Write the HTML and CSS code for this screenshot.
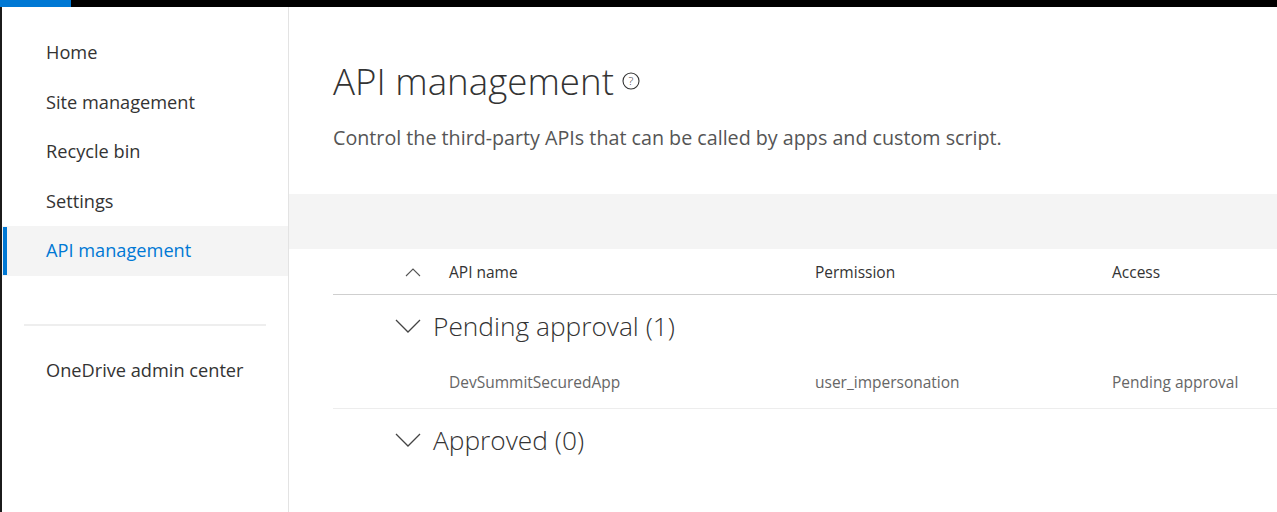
FILE: index.html
```html
<!DOCTYPE html>
<html>
<head>
<meta charset="utf-8">
<link rel="stylesheet" href="styles.css">
</head>
<body>
<div class="topbar"><div class="topbar-accent"></div></div>
<div class="shell">
  <nav class="sidebar">
    <ul class="nav">
      <li class="nav-item">Home</li>
      <li class="nav-item">Site management</li>
      <li class="nav-item">Recycle bin</li>
      <li class="nav-item">Settings</li>
      <li class="nav-item active">API management</li>
    </ul>
    <div class="nav-divider"></div>
    <ul class="nav">
      <li class="nav-item">OneDrive admin center</li>
    </ul>
  </nav>
  <main class="main">
    <header class="page-head">
      <h1 class="title">API management
        <svg class="help" width="18" height="18" viewBox="0 0 18 18"><circle cx="9" cy="9" r="8" fill="none" stroke="#333" stroke-width="1.1"/><text x="9" y="13.2" text-anchor="middle" font-size="11.5" font-family="Open Sans, sans-serif" fill="#333">?</text></svg>
      </h1>
      <p class="subtitle">Control the third-party APIs that can be called by apps and custom script.</p>
    </header>
    <div class="commandbar"></div>
    <div class="table">
      <div class="row header">
        <div class="cell caret-cell">
          <svg width="16" height="10" viewBox="0 0 16 10"><path d="M1 9 L8 2 L15 9" fill="none" stroke="#555" stroke-width="1.1"/></svg>
        </div>
        <div class="cell">API name</div>
        <div class="cell">Permission</div>
        <div class="cell">Access</div>
      </div>
      <div class="group">
        <svg class="chev" width="26" height="14" viewBox="0 0 26 14"><path d="M1 1 L13 13 L25 1" fill="none" stroke="#444" stroke-width="1.3"/></svg>
        <span>Pending approval (1)</span>
      </div>
      <div class="row data">
        <div class="cell"></div>
        <div class="cell">DevSummitSecuredApp</div>
        <div class="cell">user_impersonation</div>
        <div class="cell">Pending approval</div>
      </div>
      <div class="group">
        <svg class="chev" width="26" height="14" viewBox="0 0 26 14"><path d="M1 1 L13 13 L25 1" fill="none" stroke="#444" stroke-width="1.3"/></svg>
        <span>Approved (0)</span>
      </div>
    </div>
  </main>
</div>
</body>
</html>
```
FILE: styles.css
```css
html, body { margin: 0; padding: 0; height: 100%; }
body {
  font-family: "Open Sans", "Noto Sans", sans-serif;
  color: #333;
  background: #fff;
  overflow: hidden;
}
.topbar { height: 7px; background: #000; }
.topbar-accent { width: 71px; height: 7px; background: #0078d4; }
.shell { display: flex; height: 505px; }
.sidebar {
  width: 286px;
  flex: none;
  border-left: 2px solid #1b1b1b;
  border-right: 1px solid #e3e3e3;
  padding-top: 21px;
  box-sizing: content-box;
}
.nav { list-style: none; margin: 0; padding: 0; }
.nav-item {
  height: 49.5px;
  line-height: 49.5px;
  padding-left: 44px;
  font-size: 18.2px;
  color: #333;
  position: relative;
}
.nav-item.active { background: #f4f4f4; color: #0078d4; }
.nav-item.active::before {
  content: "";
  position: absolute;
  left: 1px; top: 1px; bottom: 1px;
  width: 4px;
  background: #0078d4;
}
.nav-divider { height: 2px; background: #eeeeee; margin: 48px 22px 20px 22px; }
.main { flex: 1; min-width: 0; }
.page-head { padding: 51px 0 0 44px; height: 187px; box-sizing: border-box; }
.title {
  margin: 0;
  font-size: 36.7px;
  font-weight: 300;
  line-height: 46px;
  display: flex;
  align-items: center;
  gap: 8px;
  color: #333;
}
.help { flex: none; }
.subtitle { margin: 20px 0 0 0; font-size: 19.7px; line-height: 28px; color: #555; }
.commandbar { height: 55px; background: #f4f4f4; }
.table { margin-left: 44px; }
.row {
  display: grid;
  grid-template-columns: 116px 366px 297px 1fr;
  align-items: center;
}
.row.header { height: 45px; border-bottom: 1.5px solid #cfcfcf; font-size: 15.5px; color: #333; }
.caret-cell { display: flex; justify-content: flex-end; padding-right: 28px; }
.row.data { height: 52px; border-bottom: 1px solid #ededed; font-size: 15.5px; color: #666; }
.group {
  height: 61px;
  display: flex;
  align-items: center;
  padding-left: 62px;
  gap: 12px;
  font-size: 26.3px;
  font-weight: 300;
  color: #333;
}
```
